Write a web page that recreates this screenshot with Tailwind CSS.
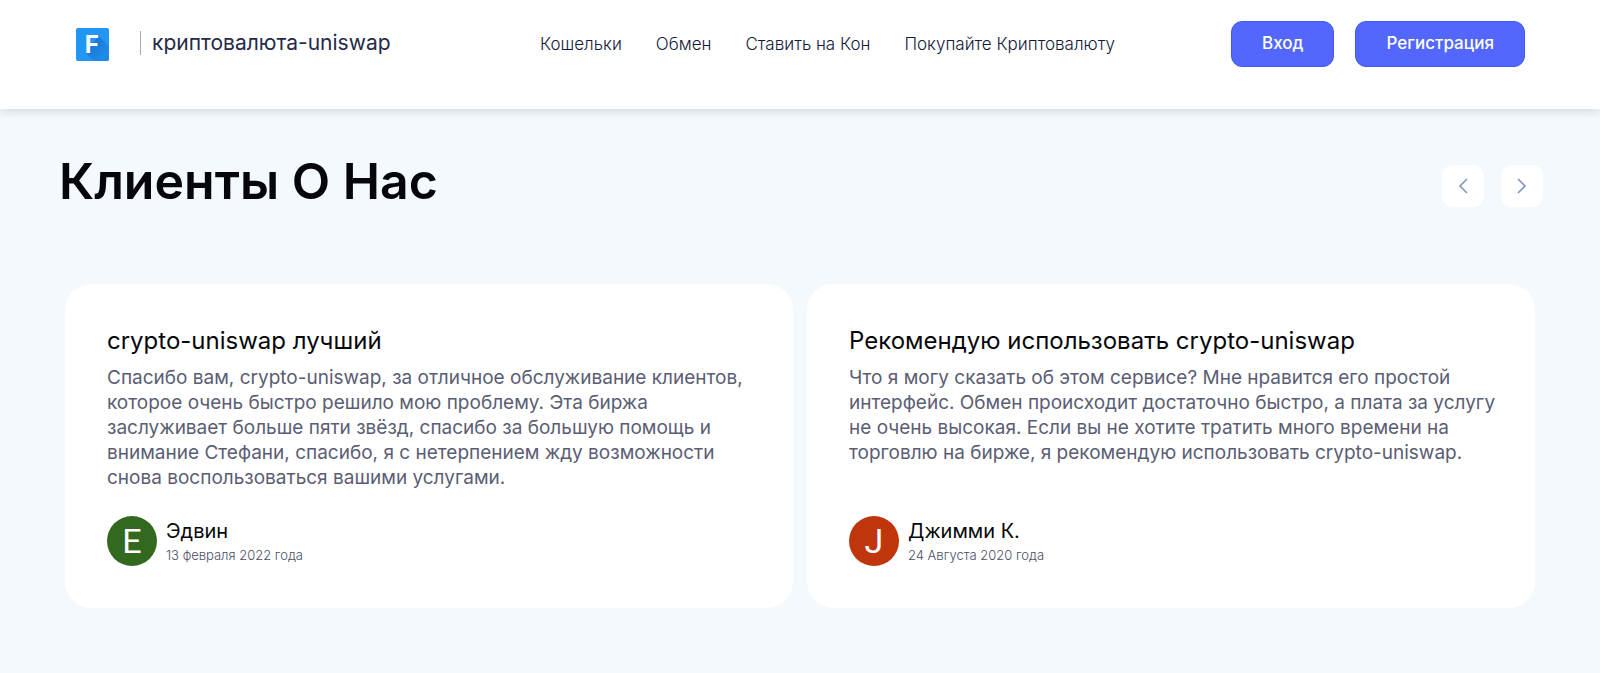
<!DOCTYPE html>
<html lang="ru">
<head>
<meta charset="utf-8">
<meta name="viewport" content="width=device-width, initial-scale=1">
<title>криптовалюта-uniswap</title>
<script src="https://cdn.jsdelivr.net/npm/@tailwindcss/browser@4"></script>
</head>
<body class="min-h-screen bg-[#f3f9fc] font-['Inter',sans-serif] text-[#06070a]">
<header class="relative flex items-start justify-between bg-white pr-[75px] pl-[76px] pt-[21px] pb-[41px] shadow-[0_2px_10px_rgba(0,0,0,0.15)]">
  <a href="#" class="flex h-[47px] w-[464px] items-center">
    <svg class="size-[33px]" viewBox="0 0 34 34" role="img" aria-label="F">
      <defs><linearGradient id="fold" x1="0" y1="0" x2="1" y2="1"><stop offset="0.2" stop-color="#1976d2"/><stop offset="0.8" stop-color="#1e8ae8"/></linearGradient></defs>
      <rect width="34" height="34" rx="2" fill="#2196f3"/>
      <path d="M23 8L34 19V32a2 2 0 0 1-2 2H19L10 25.500Z" fill="url(#fold)"/>
      <text x="9" y="26" font-family="Inter, sans-serif" font-size="25" font-weight="700" fill="#fff">F</text>
    </svg>
    <span class="ml-[31px] mb-1 flex h-6 items-center border-l border-[#a9abb8] pl-[11px] text-[21px] text-[#252a48]">криптовалюта-uniswap</span>
  </a>
  <nav class="flex h-[47px] flex-1 items-center gap-[34px] text-[17px] font-light text-[#14193a]">
    <a href="#">Кошельки</a>
    <a href="#">Обмен</a>
    <a href="#">Ставить на Кон</a>
    <a href="#">Покупайте Криптовалюту</a>
  </nav>
  <div class="flex gap-[21px] text-[17px] font-medium text-white">
    <button class="h-[46px] rounded-[11px] border border-[#3d58fb] bg-[#5367ff] px-[30px]">Вход</button>
    <button class="h-[46px] rounded-[11px] border border-[#3d58fb] bg-[#5367ff] px-[30px]">Регистрация</button>
  </div>
</header>
<main class="px-[65px] pt-[42px] pb-16">
  <div class="-mr-2 -ml-1.5 flex items-center justify-between">
    <h2 class="text-[50px] leading-[60px] font-semibold">Клиенты О Нас</h2>
    <div class="mt-2.5 flex gap-[17px]">
      <button aria-label="Назад" class="flex size-[42px] items-center justify-center rounded-[11px] bg-white">
        <svg class="h-4 w-[10px]" viewBox="0 0 10 16" fill="none" stroke="#7f97b8" stroke-width="1.600"><path d="M9 1L2 8l7 7"/></svg>
      </button>
      <button aria-label="Вперёд" class="flex size-[42px] items-center justify-center rounded-[11px] bg-white">
        <svg class="h-4 w-[10px]" viewBox="0 0 10 16" fill="none" stroke="#7f97b8" stroke-width="1.600"><path d="M1 1L8 8l-7 7"/></svg>
      </button>
    </div>
  </div>
  <div class="mt-[73px] grid grid-cols-2 gap-[14px]">
    <article class="flex flex-col rounded-[26px] bg-white py-[42px] pr-[38px] pl-[42px]">
      <h3 class="text-[24px] leading-[30px]">crypto-uniswap лучший</h3>
      <p class="mt-[9px] text-[19px] leading-[25px] text-[#5a5d73]">Спасибо вам, crypto-uniswap, за отличное обслуживание клиентов, которое очень быстро решило мою проблему. Эта биржа заслуживает больше пяти звёзд, спасибо за большую помощь и внимание Стефани, спасибо, я с нетерпением жду возможности снова воспользоваться вашими услугами.</p>
      <div class="mt-auto flex items-center gap-[9px] pt-[26px]">
        <span class="flex size-[50px] items-center justify-center rounded-full bg-[#33691e] font-['Roboto',sans-serif] text-[34px] text-white">E</span>
        <div>
          <div class="text-[20px] leading-6">Эдвин</div>
          <div class="mt-1 text-[13px] leading-4 font-light text-[#4a4d63]">13 февраля 2022 года</div>
        </div>
      </div>
    </article>
    <article class="flex flex-col rounded-[26px] bg-white py-[42px] pr-[38px] pl-[42px]">
      <h3 class="text-[24px] leading-[30px]">Рекомендую использовать crypto-uniswap</h3>
      <p class="mt-[9px] text-[19px] leading-[25px] text-[#5a5d73]">Что я могу сказать об этом сервисе? Мне нравится его простой интерфейс. Обмен происходит достаточно быстро, а плата за услугу не очень высокая. Если вы не хотите тратить много времени на торговлю на бирже, я рекомендую использовать crypto-uniswap.</p>
      <div class="mt-auto flex items-center gap-[9px] pt-[26px]">
        <span class="flex size-[50px] items-center justify-center rounded-full bg-[#bf360c] font-['Roboto',sans-serif] text-[34px] text-white">J</span>
        <div>
          <div class="text-[20px] leading-6">Джимми К.</div>
          <div class="mt-1 text-[13px] leading-4 font-light text-[#4a4d63]">24 Августа 2020 года</div>
        </div>
      </div>
    </article>
  </div>
</main>
</body>
</html>
